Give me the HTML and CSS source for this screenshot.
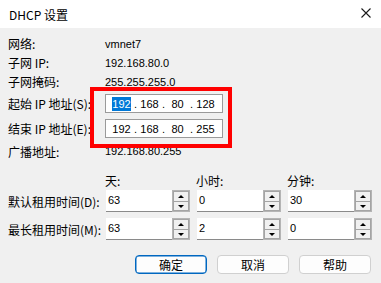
FILE: index.html
```html
<!DOCTYPE html>
<html lang="zh-CN">
<head>
  <meta charset="UTF-8" />
  <title>DHCP 设置</title>
  <link rel="stylesheet" href="styles.css">
</head>
<body>
  <div class="window">
    <div class="titlebar">
      <span class="title">DHCP 设置</span>
      <svg class="close" width="10" height="10" viewBox="0 0 10 10">
        <path d="M0.5 0.5 L9.5 9.5 M9.5 0.5 L0.5 9.5" stroke="#1a1a1a" stroke-width="1.1" fill="none" />
      </svg>
    </div>

    <div class="content">
      <div class="row"><span class="label">网络:</span><span class="value">vmnet7</span></div>
      <div class="row"><span class="label">子网 IP:</span><span class="value">192.168.80.0</span></div>
      <div class="row"><span class="label">子网掩码:</span><span class="value">255.255.255.0</span></div>

      <div class="row ip-first">
        <span class="label">起始 IP 地址(S):</span>
        <div class="ip-box">
          <span class="seg"><span class="sel">192</span></span><span class="dot">.</span>
          <span class="seg">168</span><span class="dot">.</span>
          <span class="seg">80</span><span class="dot">.</span>
          <span class="seg">128</span>
        </div>
      </div>
      <div class="row ip-second">
        <span class="label">结束 IP 地址(E):</span>
        <div class="ip-box">
          <span class="seg">192</span><span class="dot">.</span>
          <span class="seg">168</span><span class="dot">.</span>
          <span class="seg">80</span><span class="dot">.</span>
          <span class="seg">255</span>
        </div>
      </div>
      <div class="row broadcast"><span class="label">广播地址:</span><span class="value">192.168.80.255</span></div>

      <div class="lease-head">
        <span class="label"></span>
        <span class="col">天:</span>
        <span class="col">小时:</span>
        <span class="col">分钟:</span>
      </div>
      <div class="lease-row first">
        <span class="label">默认租用时间(D):</span>
        <div class="spin-group"><div class="num">63</div><div class="spinner"><span class="up"></span><span class="down"></span></div></div>
        <div class="spin-group"><div class="num">0</div><div class="spinner"><span class="up"></span><span class="down"></span></div></div>
        <div class="spin-group"><div class="num">30</div><div class="spinner"><span class="up"></span><span class="down"></span></div></div>
      </div>
      <div class="lease-row">
        <span class="label">最长租用时间(M):</span>
        <div class="spin-group"><div class="num">63</div><div class="spinner"><span class="up"></span><span class="down"></span></div></div>
        <div class="spin-group"><div class="num">2</div><div class="spinner"><span class="up"></span><span class="down"></span></div></div>
        <div class="spin-group"><div class="num">0</div><div class="spinner"><span class="up"></span><span class="down"></span></div></div>
      </div>

      <div class="buttons">
        <button class="btn default">确定</button>
        <button class="btn">取消</button>
        <button class="btn">帮助</button>
      </div>
    </div>

    <div class="mark"></div>
  </div>
</body>
</html>
```

FILE: styles.css
```css
body {
  margin: 0;
  font-family: "Noto Sans CJK SC", "Microsoft YaHei", sans-serif;
  font-size: 12px;
  color: #000;
  background: #f0f0f0;
}
.window {
  position: relative;
  width: 381px;
  height: 283px;
  overflow: hidden;
  background: #f0f0f0;
}
.titlebar {
  height: 28px;
  background: #fff;
  display: flex;
  align-items: center;
  justify-content: space-between;
  padding: 0 10px 0 9px;
}
.title {
  font-size: 12px;
}
.close {
  margin-top: -2px;
}
.content {
  padding: 6px 0 0 8px;
}
.row {
  display: flex;
  align-items: center;
  height: 19px;
}
.label {
  width: 97px;
  flex: none;
  white-space: nowrap;
}
.value {
  font-family: "Liberation Sans", Arial, sans-serif;
  font-size: 11px;
}
.ip-first {
  margin-top: 3px;
}
.ip-second {
  margin-top: 6px;
}
.broadcast {
  margin-top: 4px;
}
.broadcast .value {
  margin-top: -1px;
}
.ip-box {
  width: 118px;
  height: 19px;
  box-sizing: border-box;
  border: 1px solid #9a9a9a;
  background: #fff;
  display: flex;
  align-items: center;
  padding-left: 4px;
  font-family: "Liberation Sans", Arial, sans-serif;
  font-size: 11px;
}
.seg {
  width: 23px;
  text-align: center;
}
.dot {
  width: 5px;
  text-align: center;
}
.sel {
  background: #0078d7;
  color: #fff;
  padding: 1px 0;
}
.lease-head {
  display: flex;
  align-items: center;
  height: 18px;
  margin-top: 10px;
}
.col {
  width: 91px;
}
.lease-row {
  display: flex;
  align-items: center;
  height: 22px;
  margin-top: 6px;
}
.lease-row.first {
  margin-top: 1px;
}
.lease-row .label {
  width: 98px;
}
.spin-group {
  display: flex;
  width: 84px;
  height: 22px;
  margin-right: 7px;
}
.num {
  width: 66px;
  box-sizing: border-box;
  background: #fff;
  border-bottom: 1px solid #8a8a8a;
  padding-left: 2px;
  line-height: 21px;
  font-family: "Liberation Sans", Arial, sans-serif;
  font-size: 11px;
}
.spinner {
  width: 18px;
  height: 22px;
  box-sizing: border-box;
  border: 1px solid #b4b4b4;
  background: #e8e8e8;
  display: flex;
  flex-direction: column;
}
.spinner span {
  flex: 1;
  position: relative;
  border: 1px solid #a4a4a4;
  background: #f0f0f0;
}
.spinner .up {
  border-bottom-width: 0;
}
.spinner .up::after,
.spinner .down::after {
  content: "";
  position: absolute;
  left: 4px;
  top: 3px;
  border-left: 3px solid transparent;
  border-right: 3px solid transparent;
}
.spinner .up::after {
  border-bottom: 3px solid #000;
}
.spinner .down::after {
  border-top: 3px solid #000;
}
.buttons {
  display: flex;
  justify-content: flex-end;
  gap: 10px;
  margin-top: 15px;
  padding-right: 10px;
}
.btn {
  width: 72px;
  height: 19px;
  padding: 0;
  font-family: "Noto Sans CJK SC", sans-serif;
  font-size: 12px;
  line-height: 17px;
  background: #fdfdfd;
  border: 1px solid #d0d0d0;
  border-radius: 4px;
  color: #000;
}
.btn.default {
  border-color: #0067c0;
  box-shadow: inset 0 0 0 0.5px #0067c0;
}
.mark {
  position: absolute;
  left: 90px;
  top: 87px;
  width: 142px;
  height: 61px;
  box-sizing: border-box;
  border: 4px solid #ff0000;
}
```
